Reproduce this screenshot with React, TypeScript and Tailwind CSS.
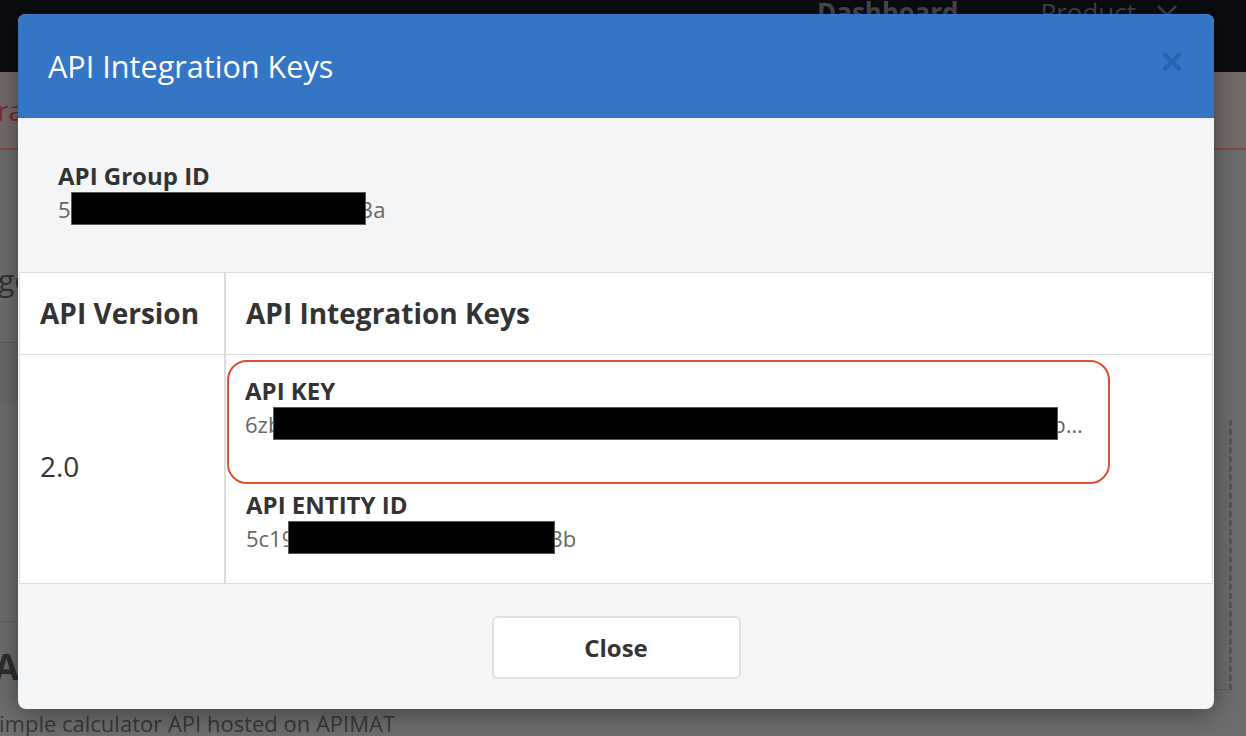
import React from "react";

function Redact({ w, className = "" }: { w: number; className?: string }) {
  return (
    <span
      className={"relative z-10 inline-block h-[33px] bg-black border border-[#5a5a5a] align-middle " + className}
      style={{ width: w }}
    />
  );
}

export default function App() {
  return (
    <div className="relative w-[1246px] h-[736px] overflow-hidden bg-[#6f6f6f] font-['Open_Sans',sans-serif]">
      {/* background page (dimmed) */}
      <div className="flex flex-col h-full">
        <div className="h-[72px] shrink-0 bg-[#0c0d11] flex items-start pl-[817px]">
          <span className="text-[26px] font-bold text-[#4c4c4e] leading-none -mt-[1px]">Dashboard</span>
          <span className="ml-[82px] text-[26px] text-[#46464a] leading-none -mt-[1px]">Product</span>
          <svg className="ml-[20px] mt-[4px]" width="22" height="14" viewBox="0 0 22 14">
            <path d="M2 2 L11 11 L20 2" fill="none" stroke="#46464a" strokeWidth="2.5" />
          </svg>
        </div>
        <div className="h-[78px] shrink-0 bg-[#776c6c] border-b-2 border-[#7e4c4c] flex items-center justify-between">
          <span className="text-[28px] text-[#7a2e2e] -ml-[3px] leading-none">ra</span>
        </div>
        <div className="flex-1 flex">
          <div className="w-[585px] shrink-0 flex flex-col">
            <div className="h-[193px] border-b border-[#5f5f5f] pt-[112px]">
              <span className="block text-[30px] text-[#333] leading-[36px] -ml-[2px]">ge</span>
            </div>
            <div className="h-[279px] border-b border-[#5f5f5f] flex flex-col">
              <div className="h-[60px] bg-[#6a6a6a]" />
            </div>
            <div className="pt-[25px]">
              <span className="block text-[36px] font-bold text-[#2e2e2e] leading-[40px] -ml-[6px]">API</span>
              <span className="block mt-[21px] text-[22px] text-[#383838] leading-[30px] -ml-[1px]">
                imple calculator API hosted on APIMAT
              </span>
            </div>
          </div>
          <div className="flex-1 flex flex-col pt-[270px] pr-[14px]">
            <div className="h-[270px] border-r-[3px] border-b border-dashed border-[#565656]" />
          </div>
        </div>
      </div>

      {/* modal */}
      <div className="absolute left-[18px] top-[14px] w-[1196px] rounded-[8px] overflow-hidden bg-[#f4f5f7] shadow-[0_4px_30px_rgba(0,0,0,0.45)]">
        <div className="h-[104px] bg-[#3475c6] flex items-center justify-between pl-[30px] pr-[32px]">
          <h1 className="text-[30.6px] font-normal text-white leading-none">API Integration Keys</h1>
          <svg width="20" height="20" viewBox="0 0 20 20" className="-mt-[8px]">
            <path d="M3 3 L17 17 M17 3 L3 17" stroke="#2962ad" strokeWidth="4.5" strokeLinecap="round" />
          </svg>
        </div>

        <div className="pt-[42px] pb-[47px] pl-[40px]">
          <div className="text-[24px] font-bold text-[#333] leading-[32px]">API Group ID</div>
          <div className="text-[22px] text-[#666] leading-[32px] flex items-center">
            <span>5</span>
            <Redact w={295} />
            <span className="-ml-[5px]">3a</span>
          </div>
        </div>

        <div className="mx-[1px] bg-white border border-[#dcdcdc]">
          <div className="flex h-[82px] border-b border-[#dcdcdc]">
            <div className="w-[206px] shrink-0 border-r-2 border-[#dcdcdc] flex items-center pl-[20px]">
              <span className="text-[28px] font-bold text-[#333] -mt-[2px]">API Version</span>
            </div>
            <div className="flex-1 flex items-center pl-[20px]">
              <span className="text-[28px] font-bold text-[#333] -mt-[2px]">API Integration Keys</span>
            </div>
          </div>
          <div className="flex h-[228px]">
            <div className="w-[206px] shrink-0 border-r-2 border-[#dcdcdc] flex items-center pl-[20px]">
              <span className="text-[28px] text-[#333] -mt-[6px]">2.0</span>
            </div>
            <div className="flex-1 pl-[1px] pt-[5px]">
              <div className="w-[883px] h-[124px] border-2 border-[#df4f33] rounded-[20px] pl-[16px] pt-[13px]">
                <div className="text-[24px] font-bold text-[#333] leading-[32px]">API KEY</div>
                <div className="text-[22px] text-[#666] leading-[32px] flex items-center">
                  <span>6zb</span>
                  <Redact w={785} className="-ml-[8px]" />
                  <span className="-ml-[6px]">b…</span>
                </div>
              </div>
              <div className="pl-[19px] pt-[5px]">
                <div className="text-[24px] font-bold text-[#333] leading-[32px]">API ENTITY ID</div>
                <div className="text-[22px] text-[#666] leading-[32px] flex items-center">
                  <span className="-mr-[6px]">5c19</span>
                  <Redact w={267} />
                  <span className="-ml-[5px]">3b</span>
                </div>
              </div>
            </div>
          </div>
        </div>

        <div className="flex justify-center pt-[32px] pb-[30px]">
          <button className="w-[249px] h-[63px] bg-white border-2 border-[#dedfe2] rounded-[6px] text-[24px] font-bold text-[#333]">
            Close
          </button>
        </div>
      </div>
    </div>
  );
}
